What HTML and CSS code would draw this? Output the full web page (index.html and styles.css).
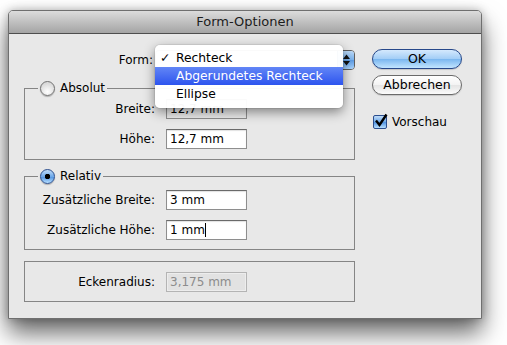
FILE: index.html
```html
<!DOCTYPE html>
<html lang="de">

<head>
    <meta charset="UTF-8">
    <title>Form-Optionen</title>
    <link rel="stylesheet" href="styles.css">
</head>

<body>
    <div class="window">
        <div class="titlebar">Form-Optionen</div>
        <div class="content">
            <div class="main">
                <div class="form-row">
                    <span class="form-label">Form:</span>
                    <div class="popup">
                        <span class="popup-arrows">
                            <svg width="9" height="14" viewBox="0 0 9 14">
                                <path d="M1 6 L4.5 1.5 L8 6 Z M1 8 L4.5 12.5 L8 8 Z" fill="#111"/>
                            </svg>
                        </span>
                    </div>
                    <ul class="menu">
                        <li class="checked">Rechteck</li>
                        <li class="selected">Abgerundetes Rechteck</li>
                        <li>Ellipse</li>
                    </ul>
                </div>

                <div class="group group-abs">
                    <div class="legend"><span class="radio"></span>Absolut</div>
                    <div class="row row-first">
                        <span class="label">Breite:</span>
                        <span class="field field-dim">12,7 mm</span>
                    </div>
                    <div class="row">
                        <span class="label">Höhe:</span>
                        <span class="field">12,7 mm</span>
                    </div>
                </div>

                <div class="group group-rel">
                    <div class="legend"><span class="radio on"></span>Relativ</div>
                    <div class="row row-first">
                        <span class="label">Zusätzliche Breite:</span>
                        <span class="field">3 mm</span>
                    </div>
                    <div class="row">
                        <span class="label">Zusätzliche Höhe:</span>
                        <span class="field">1 mm<span class="caret"></span></span>
                    </div>
                </div>

                <div class="group group-corner">
                    <div class="row">
                        <span class="label">Eckenradius:</span>
                        <span class="field field-off">3,175 mm</span>
                    </div>
                </div>
            </div>

            <div class="side">
                <div class="btn btn-default">OK</div>
                <div class="btn">Abbrechen</div>
                <div class="check-row">
                    <span class="checkbox">
                        <svg width="16" height="16" viewBox="0 0 16 16">
                            <path d="M3 7.5 L6.5 12 L13.5 1.5" fill="none" stroke="#000" stroke-width="2.4"/>
                        </svg>
                    </span>
                    Vorschau
                </div>
            </div>
        </div>
    </div>
</body>

</html>
```

FILE: styles.css
```css
* {
    margin: 0;
    padding: 0;
    box-sizing: border-box;
}

html,
body {
    height: 100%;
}

body {
    background-color: #fff;
    font-family: "DejaVu Sans", "Liberation Sans", sans-serif;
    font-size: 12px;
    color: #000;
    padding-top: 10px;
}

.window {
    width: 474px;
    height: 309px;
    margin-left: 8px;
    border: 1px solid #6f6f6f;
    border-radius: 5px 5px 0 0;
    background-color: #e8e8e8;
    box-shadow: 0 14px 24px rgba(0, 0, 0, .6), 0 0 10px rgba(0, 0, 0, .25);
}

.titlebar {
    height: 23px;
    line-height: 22px;
    text-align: center;
    font-size: 13px;
    color: #1c1c1c;
    background: linear-gradient(#dcdcdc, #a4a4a4);
    border-bottom: 1px solid #4e4e4e;
    border-radius: 4px 4px 0 0;
}

.content {
    display: flex;
    gap: 17px;
    padding: 15px 0 0 15px;
}

.main {
    width: 331px;
    display: flex;
    flex-direction: column;
}

.side {
    width: 90px;
    display: flex;
    flex-direction: column;
}

/* Form popup */

.form-row {
    position: relative;
    display: flex;
    align-items: center;
    justify-content: flex-end;
    gap: 2px;
    height: 20px;
    margin-top: 1px;
}

.popup {
    width: 200px;
    height: 20px;
    display: flex;
    justify-content: flex-end;
    border: 1px solid #5f5f5f;
    border-radius: 4px;
    background: linear-gradient(#fff, #f0f0f0 50%, #e6e6e6 51%, #fafafa);
}

.popup-arrows {
    width: 17px;
    display: flex;
    align-items: center;
    justify-content: center;
    border-left: 1px solid #34579a;
    border-radius: 0 3px 3px 0;
    background: linear-gradient(#bcdaf8, #7ab3ee 50%, #5d9ce6 51%, #a9d5ff);
}

.menu {
    position: absolute;
    left: 131px;
    top: -5px;
    width: 188px;
    list-style: none;
    padding: 4px 0 5px;
    font-size: 12.3px;
    background-color: rgba(255, 255, 255, .97);
    border-radius: 5px;
    box-shadow: 0 4px 12px rgba(0, 0, 0, .45), 0 0 0 1px rgba(0, 0, 0, .06);
    z-index: 2;
}

.menu li {
    position: relative;
    height: 18px;
    line-height: 18px;
    padding-left: 21px;
}

.menu li.checked::before {
    content: "✓";
    position: absolute;
    left: 5px;
    font-weight: bold;
}

.menu li.selected {
    color: #fff;
    background: linear-gradient(#6286f6, #2d54ee);
}

/* Groups */

.group {
    border: 1px solid #858585;
}

.group-abs {
    margin-top: 18px;
    padding-bottom: 10px;
}

.group-rel {
    margin-top: 16px;
    padding-bottom: 9px;
}

.group-corner {
    margin-top: 11px;
    padding: 10px 0 9px;
}

.legend {
    display: flex;
    align-items: center;
    gap: 5px;
    width: max-content;
    height: 16px;
    margin: -9px 0 0 13px;
    padding: 0 2px;
    background-color: #e8e8e8;
}

.radio {
    width: 15px;
    height: 15px;
    border-radius: 50%;
    border: 1px solid #707070;
    background: radial-gradient(circle at 50% 75%, #fff, #dadada 70%);
    box-shadow: 0 1px 1px rgba(0, 0, 0, .25);
}

.radio.on {
    border-color: #2b4e8e;
    background: radial-gradient(circle, #000 0 2.5px, transparent 3px),
        linear-gradient(#c0dcf8, #6ea9ea 50%, #4d90e0 51%, #b8e0ff);
}

.row {
    display: flex;
    align-items: center;
    gap: 11px;
    height: 20px;
    margin-top: 10px;
}

.row-first {
    margin-top: 3px;
}

.group-rel .row-first {
    margin-top: 6px;
}

.group-corner .row {
    margin-top: 0;
}

.label {
    width: 130px;
    text-align: right;
}

.field {
    width: 81px;
    height: 20px;
    line-height: 18px;
    padding-left: 3px;
    border: 1px solid #8e8e8e;
    border-top-color: #6a6a6a;
    background-color: #fff;
    box-shadow: inset 0 1px 1px rgba(0, 0, 0, .12);
}

.field-dim {
    background-color: #ececec;
}

.field-off {
    color: #8c8c8c;
    border-color: #b4b4b4;
    background-color: #e2e2e2;
    box-shadow: inset 0 0 0 1px #ededed;
}

.caret {
    display: inline-block;
    width: 1px;
    height: 14px;
    vertical-align: -3px;
    background-color: #000;
}

/* Buttons */

.btn {
    height: 20px;
    line-height: 18px;
    text-align: center;
    font-size: 12.5px;
    border: 1px solid #6a6a6a;
    border-radius: 10px;
    background: linear-gradient(#fff, #f3f3f3 50%, #e4e4e4 51%, #fbfbfb);
    box-shadow: 0 1px 1px rgba(0, 0, 0, .15);
    margin-top: 6px;
}

.btn-default {
    margin-top: 0;
    border-color: #27488a;
    background: linear-gradient(#d4e9fd, #a2cdf6 50%, #7ab6ef 51%, #c2e5ff);
}

.check-row {
    display: flex;
    align-items: center;
    gap: 5px;
    margin: 20px 0 0 1px;
    height: 14px;
}

.checkbox {
    position: relative;
    width: 14px;
    height: 14px;
    border: 1px solid #2b4e8e;
    border-radius: 2px;
    background: linear-gradient(#c0dcf8, #6ea9ea 50%, #4d90e0 51%, #b8e0ff);
}

.checkbox svg {
    position: absolute;
    left: -1px;
    top: -3px;
}
```
